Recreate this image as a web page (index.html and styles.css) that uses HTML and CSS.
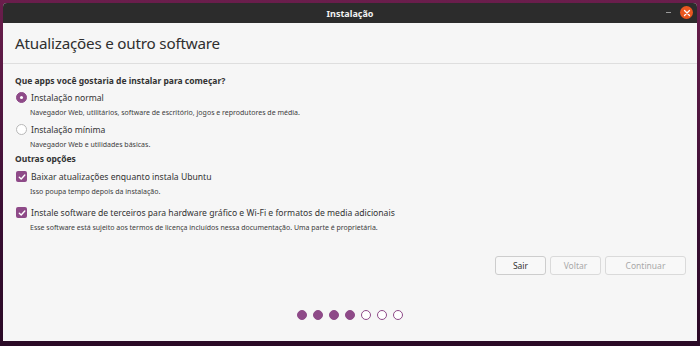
FILE: index.html
```html
<!DOCTYPE html>
<html lang="pt">
<head>
  <meta charset="UTF-8" />
  <title>Instalação</title>
  <link rel="stylesheet" href="styles.css">
</head>
<body>
  <div class="window">
    <div class="titlebar">
      <span class="title">Instalação</span>
      <div class="controls">
        <span class="minimize"></span>
        <span class="close">
          <svg width="8" height="8" viewBox="0 0 8 8"><path d="M1.5 1.5 L6.5 6.5 M6.5 1.5 L1.5 6.5" stroke="#fff" stroke-width="1.3" stroke-linecap="round"/></svg>
        </span>
      </div>
    </div>
    <header class="page-header">
      <h1>Atualizações e outro software</h1>
    </header>
    <main class="content">
      <h2>Que apps você gostaria de instalar para começar?</h2>
      <div class="option">
        <span class="radio checked"></span>
        <span class="label">Instalação normal</span>
      </div>
      <p class="desc">Navegador Web, utilitários, software de escritório, jogos e reprodutores de média.</p>
      <div class="option">
        <span class="radio"></span>
        <span class="label">Instalação mínima</span>
      </div>
      <p class="desc">Navegador Web e utilidades básicas.</p>

      <h2 class="other">Outras opções</h2>
      <div class="option first">
        <span class="check">
          <svg width="8" height="8" viewBox="0 0 8 8"><path d="M1.3 4.2 L3.2 6 L6.8 2" stroke="#fff" stroke-width="1.4" fill="none" stroke-linecap="round" stroke-linejoin="round"/></svg>
        </span>
        <span class="label">Baixar atualizações enquanto instala Ubuntu</span>
      </div>
      <p class="desc">Isso poupa tempo depois da instalação.</p>
      <div class="option spaced">
        <span class="check">
          <svg width="8" height="8" viewBox="0 0 8 8"><path d="M1.3 4.2 L3.2 6 L6.8 2" stroke="#fff" stroke-width="1.4" fill="none" stroke-linecap="round" stroke-linejoin="round"/></svg>
        </span>
        <span class="label">Instale software de terceiros para hardware gráfico e Wi-Fi e formatos de media adicionais</span>
      </div>
      <p class="desc">Esse software está sujeito aos termos de licença incluídos nessa documentação. Uma parte é proprietária.</p>

      <div class="buttons">
        <button class="btn quit">Sair</button>
        <button class="btn back" disabled>Voltar</button>
        <button class="btn next" disabled>Continuar</button>
      </div>
    </main>
    <footer class="dots">
      <span class="dot done"></span>
      <span class="dot done"></span>
      <span class="dot done"></span>
      <span class="dot done"></span>
      <span class="dot"></span>
      <span class="dot"></span>
      <span class="dot"></span>
    </footer>
  </div>
</body>
</html>
```

FILE: styles.css
```css
body {
  margin: 0;
  width: 700px;
  height: 346px;
  padding: 3px 3px 0 3px;
  box-sizing: border-box;
  background: linear-gradient(to bottom, #6a1e4c 0%, #3b0f34 60%, #2a0a26 100%);
  font-family: 'Noto Sans', sans-serif;
  overflow: hidden;
}
.window {
  height: 338px;
  background: #f6f6f6;
  display: flex;
  flex-direction: column;
  border-radius: 4px 4px 0 0;
  overflow: hidden;
}
.titlebar {
  height: 20px;
  flex: none;
  background: #2c2c2c;
  display: flex;
  align-items: center;
  justify-content: center;
  position: relative;
}
.title {
  color: #f2f2f2;
  font-size: 9px;
  font-weight: 700;
}
.controls {
  position: absolute;
  right: 4px;
  top: 3px;
  display: flex;
  align-items: center;
  gap: 9px;
}
.minimize {
  width: 5px;
  height: 1px;
  background: #9a9a9a;
}
.close {
  width: 13px;
  height: 13px;
  border-radius: 50%;
  background: #e9571f;
  display: flex;
  align-items: center;
  justify-content: center;
}
.page-header {
  height: 40px;
  flex: none;
  border-bottom: 1px solid #dedede;
  display: flex;
  align-items: center;
  padding-left: 12px;
}
.page-header h1 {
  margin: 0;
  font-size: 15.2px;
  font-weight: 400;
  color: #2f2f2f;
  letter-spacing: -0.2px;
}
.content {
  flex: 1;
  padding: 11px 11px 0 12px;
  color: #333;
}
h2 {
  margin: 0;
  font-size: 8.5px;
  font-weight: 700;
  color: #333;
  height: 13px;
}
h2.other {
  margin-top: 1px;
}
.option {
  display: flex;
  align-items: center;
  height: 17px;
  margin-top: 1px;
}
.option.first {
  margin-top: 2px;
}
.option.spaced {
  margin-top: 5px;
}
.label {
  font-size: 8.6px;
  margin-left: 4px;
  color: #333;
}
.radio {
  width: 9px;
  height: 9px;
  border: 1px solid #b8b8b8;
  border-radius: 50%;
  background: #fff;
  margin-left: 1px;
  box-sizing: content-box;
}
.radio.checked {
  background: #8e4a88;
  border-color: #8e4a88;
  position: relative;
}
.radio.checked::after {
  content: '';
  position: absolute;
  left: 3px;
  top: 3px;
  width: 3px;
  height: 3px;
  border-radius: 50%;
  background: #fff;
}
.check {
  width: 11px;
  height: 11px;
  border-radius: 2px;
  background: #8e4a88;
  margin-left: 1px;
  display: flex;
  align-items: center;
  justify-content: center;
}
.desc {
  margin: 0;
  font-size: 7px;
  color: #3c3c3c;
  padding-left: 15px;
  height: 14px;
  line-height: 14px;
}
.buttons {
  display: flex;
  justify-content: flex-end;
  gap: 4px;
  margin-top: 21px;
}
.btn {
  height: 19px;
  font-family: 'Noto Sans', sans-serif;
  font-size: 8.5px;
  background: #f8f8f8;
  border: 1px solid #cdcdcd;
  border-radius: 3px;
  color: #333;
  padding: 0;
}
.quit {
  width: 51px;
}
.back {
  width: 51px;
  color: #a8a8a8;
  border-color: #dadada;
}
.next {
  width: 81px;
  color: #a8a8a8;
  border-color: #dadada;
}
.dots {
  height: 54px;
  flex: none;
  display: flex;
  justify-content: center;
  align-items: flex-start;
  gap: 6px;
  padding-top: 23px;
  box-sizing: border-box;
}
.dot {
  width: 8px;
  height: 8px;
  border-radius: 50%;
  border: 1px solid #8e4a88;
  background: #fff;
}
.dot.done {
  background: #8e4a88;
}
```
